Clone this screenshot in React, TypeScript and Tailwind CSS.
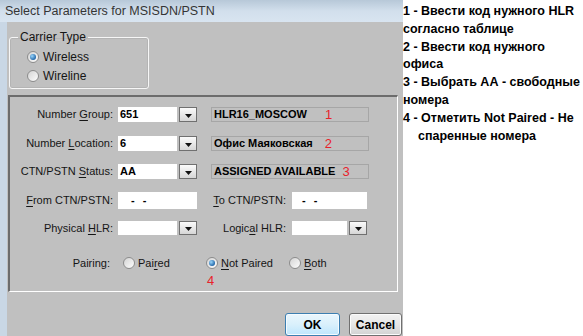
import type { FC, ReactNode } from 'react';

const Radio: FC<{ checked?: boolean }> = ({ checked }) => (
    <span className="flex h-[12px] w-[12px] shrink-0 items-center justify-center rounded-full border border-[#8c8c8c] bg-linear-to-br from-[#d4d4d4] to-[#fdfdfd]">
        {checked && <span className="h-[6px] w-[6px] rounded-full bg-[radial-gradient(circle_at_35%_35%,#9ad6fb,#1c62a6_75%)]" />}
    </span>
);

const DropButton = () => (
    <div className="ml-[2px] flex h-full w-[18px] shrink-0 items-end justify-center border border-[#707070] bg-linear-to-b from-[#fbfbfb] to-[#d6d6d6] pb-[3px]">
        <svg width="7" height="4" viewBox="0 0 7 4">
            <polygon points="0,0 7,0 3.5,4" fill="#111" />
        </svg>
    </div>
);

const Label: FC<{ children: ReactNode; className?: string }> = ({ children, className = '' }) => (
    <div className={`shrink-0 whitespace-nowrap text-right text-[#151515] ${className}`}>{children}</div>
);

const Field: FC<{ w: string; children?: ReactNode }> = ({ w, children }) => (
    <div className={`flex h-full shrink-0 items-center bg-white pl-[2px] font-bold text-black ${w}`}>{children}</div>
);

const Info: FC<{ text: string; num: string; gap: string }> = ({ text, num, gap }) => (
    <div className="ml-[14px] flex h-full w-[158px] shrink-0 items-center border border-[#a6a6a6] pl-[2px]">
        <span className="font-bold text-black">{text}</span>
        <span className={`text-[13px] text-[#e8222b] ${gap}`}>{num}</span>
    </div>
);

const U: FC<{ children: ReactNode }> = ({ children }) => <span className="underline underline-offset-[2px]">{children}</span>;

export default function App() {
    return (
        <div className="flex h-[336px] w-[583px] overflow-hidden bg-white font-['Liberation_Sans',Arial,sans-serif] text-[11px]">
            {/* Dialog */}
            <div className="flex w-[403px] shrink-0 flex-col bg-[#c0c0c0]">
                <div className="flex h-[22px] shrink-0 items-center bg-linear-to-b from-[#b7c8d8] via-[#d2dfec] to-[#d8e4f0] pl-[5px] text-[12.5px] text-[#353535]">
                    Select Parameters for MSISDN/PSTN
                </div>

                <div className="flex flex-1">
                    <div className="w-[7px] shrink-0 bg-[#c9d7e5]" />
                    <div className="flex flex-1 flex-col">
                        {/* Carrier type */}
                        <fieldset className="ml-[2px] mt-[8px] w-[140px] rounded-[3px] border border-[#f6f6f6] px-[17px] pb-[5px] shadow-[inset_0_0_0_1px_#b4b4b4]">
                            <legend className="-ml-[9px] h-[14px] px-[2px] text-[12px] leading-[14px] text-[#151515]">Carrier Type</legend>
                            <div className="mt-[6px] flex h-[14px] items-center gap-[4px] text-[12px] text-[#151515]">
                                <Radio checked />
                                <span>Wireless</span>
                            </div>
                            <div className="mt-[5px] flex h-[14px] items-center gap-[4px] text-[12px] text-[#151515]">
                                <Radio />
                                <span>Wireline</span>
                            </div>
                        </fieldset>

                        {/* Parameters panel */}
                        <div className="ml-[1px] mt-[6px] h-[197px] w-[390px] border-b border-l-2 border-r border-t-2 border-b-white border-l-[#6c6c6c] border-r-white border-t-[#6c6c6c]">
                            <div className="mt-[10px] flex h-[15px] items-center">
                                <Label className="w-[103px] text-[#84201f]">Number <U>G</U>roup:</Label>
                                <div className="ml-[5px] flex h-full">
                                    <Field w="w-[59px]">651</Field>
                                    <DropButton />
                                </div>
                                <Info text="HLR16_MOSCOW" num="1" gap="ml-[18px]" />
                            </div>

                            <div className="mt-[14px] flex h-[15px] items-center">
                                <Label className="w-[103px]">Number <U>L</U>ocation:</Label>
                                <div className="ml-[5px] flex h-full">
                                    <Field w="w-[59px]">6</Field>
                                    <DropButton />
                                </div>
                                <Info text="Офис Маяковская" num="2" gap="ml-[12px]" />
                            </div>

                            <div className="mt-[13px] flex h-[15px] items-center">
                                <Label className="w-[103px]">CTN/PSTN <U>S</U>tatus:</Label>
                                <div className="ml-[5px] flex h-full">
                                    <Field w="w-[59px]">AA</Field>
                                    <DropButton />
                                </div>
                                <Info text="ASSIGNED AVAILABLE" num="3" gap="ml-[7px]" />
                            </div>

                            <div className="mt-[13px] flex h-[17px] items-center">
                                <Label className="w-[103px]"><U>F</U>rom CTN/PSTN:</Label>
                                <div className="ml-[5px] flex h-full">
                                    <Field w="w-[79px]">
                                        <span className="ml-[11px]">-</span>
                                        <span className="ml-[8px]">-</span>
                                    </Field>
                                </div>
                                <Label className="w-[89px]"><U>T</U>o CTN/PSTN:</Label>
                                <div className="ml-[6px] flex h-full">
                                    <Field w="w-[75px]">
                                        <span className="ml-[8px]">-</span>
                                        <span className="ml-[8px]">-</span>
                                    </Field>
                                </div>
                            </div>

                            <div className="mt-[12px] flex h-[14px] items-center">
                                <Label className="w-[103px]">Physical <U>H</U>LR:</Label>
                                <div className="ml-[5px] flex h-full">
                                    <Field w="w-[59px]" />
                                    <DropButton />
                                </div>
                                <Label className="w-[89px]">Logic<U>a</U>l HLR:</Label>
                                <div className="ml-[6px] flex h-full">
                                    <Field w="w-[55px]" />
                                    <DropButton />
                                </div>
                            </div>

                            <div className="mt-[21px] flex h-[14px] items-center text-[#151515]">
                                <Label className="w-[103px] pr-[3px]">Pairing:</Label>
                                <div className="ml-[10px] flex w-[83px] items-center gap-[3px]">
                                    <Radio />
                                    <span>Pai<U>r</U>ed</span>
                                </div>
                                <div className="flex w-[83px] items-center gap-[3px]">
                                    <Radio checked />
                                    <span><U>N</U>ot Paired</span>
                                </div>
                                <div className="flex items-center gap-[3px]">
                                    <Radio />
                                    <span><U>B</U>oth</span>
                                </div>
                            </div>

                            <div className="mt-[4px] flex h-[13px] items-center">
                                <span className="ml-[197px] text-[13px] text-[#e8222b]">4</span>
                            </div>
                        </div>

                        {/* Buttons */}
                        <div className="mt-[21px] flex justify-end gap-[9px] pr-[1px]">
                            <button className="h-[23px] w-[55px] rounded-[3px] border border-[#3c7fb1] bg-linear-to-b from-[#eaf6fd] via-[#d9f0fc] to-[#bee6fd] text-[12px] font-bold text-black shadow-[inset_0_0_0_1px_#f4fbff]">
                                OK
                            </button>
                            <button className="h-[23px] w-[53px] rounded-[3px] border border-[#707070] bg-linear-to-b from-[#f2f2f2] via-[#e6e6e6] to-[#d2d2d2] text-[12px] font-bold text-black shadow-[inset_0_0_0_1px_#fbfbfb]">
                                Cancel
                            </button>
                        </div>
                    </div>
                </div>
            </div>

            {/* Notes */}
            <div className="flex-1 whitespace-nowrap pt-[3px] text-[12.5px] font-bold leading-[17.8px] text-black">
                <div>1 - Ввести код нужного HLR</div>
                <div>согласно таблице</div>
                <div>2 - Ввести код нужного</div>
                <div>офиса</div>
                <div>3 - Выбрать АА - свободные</div>
                <div>номера</div>
                <div>4 - Отметить Not Paired - Не</div>
                <div className="pl-[15px]">спаренные номера</div>
            </div>
        </div>
    );
}
